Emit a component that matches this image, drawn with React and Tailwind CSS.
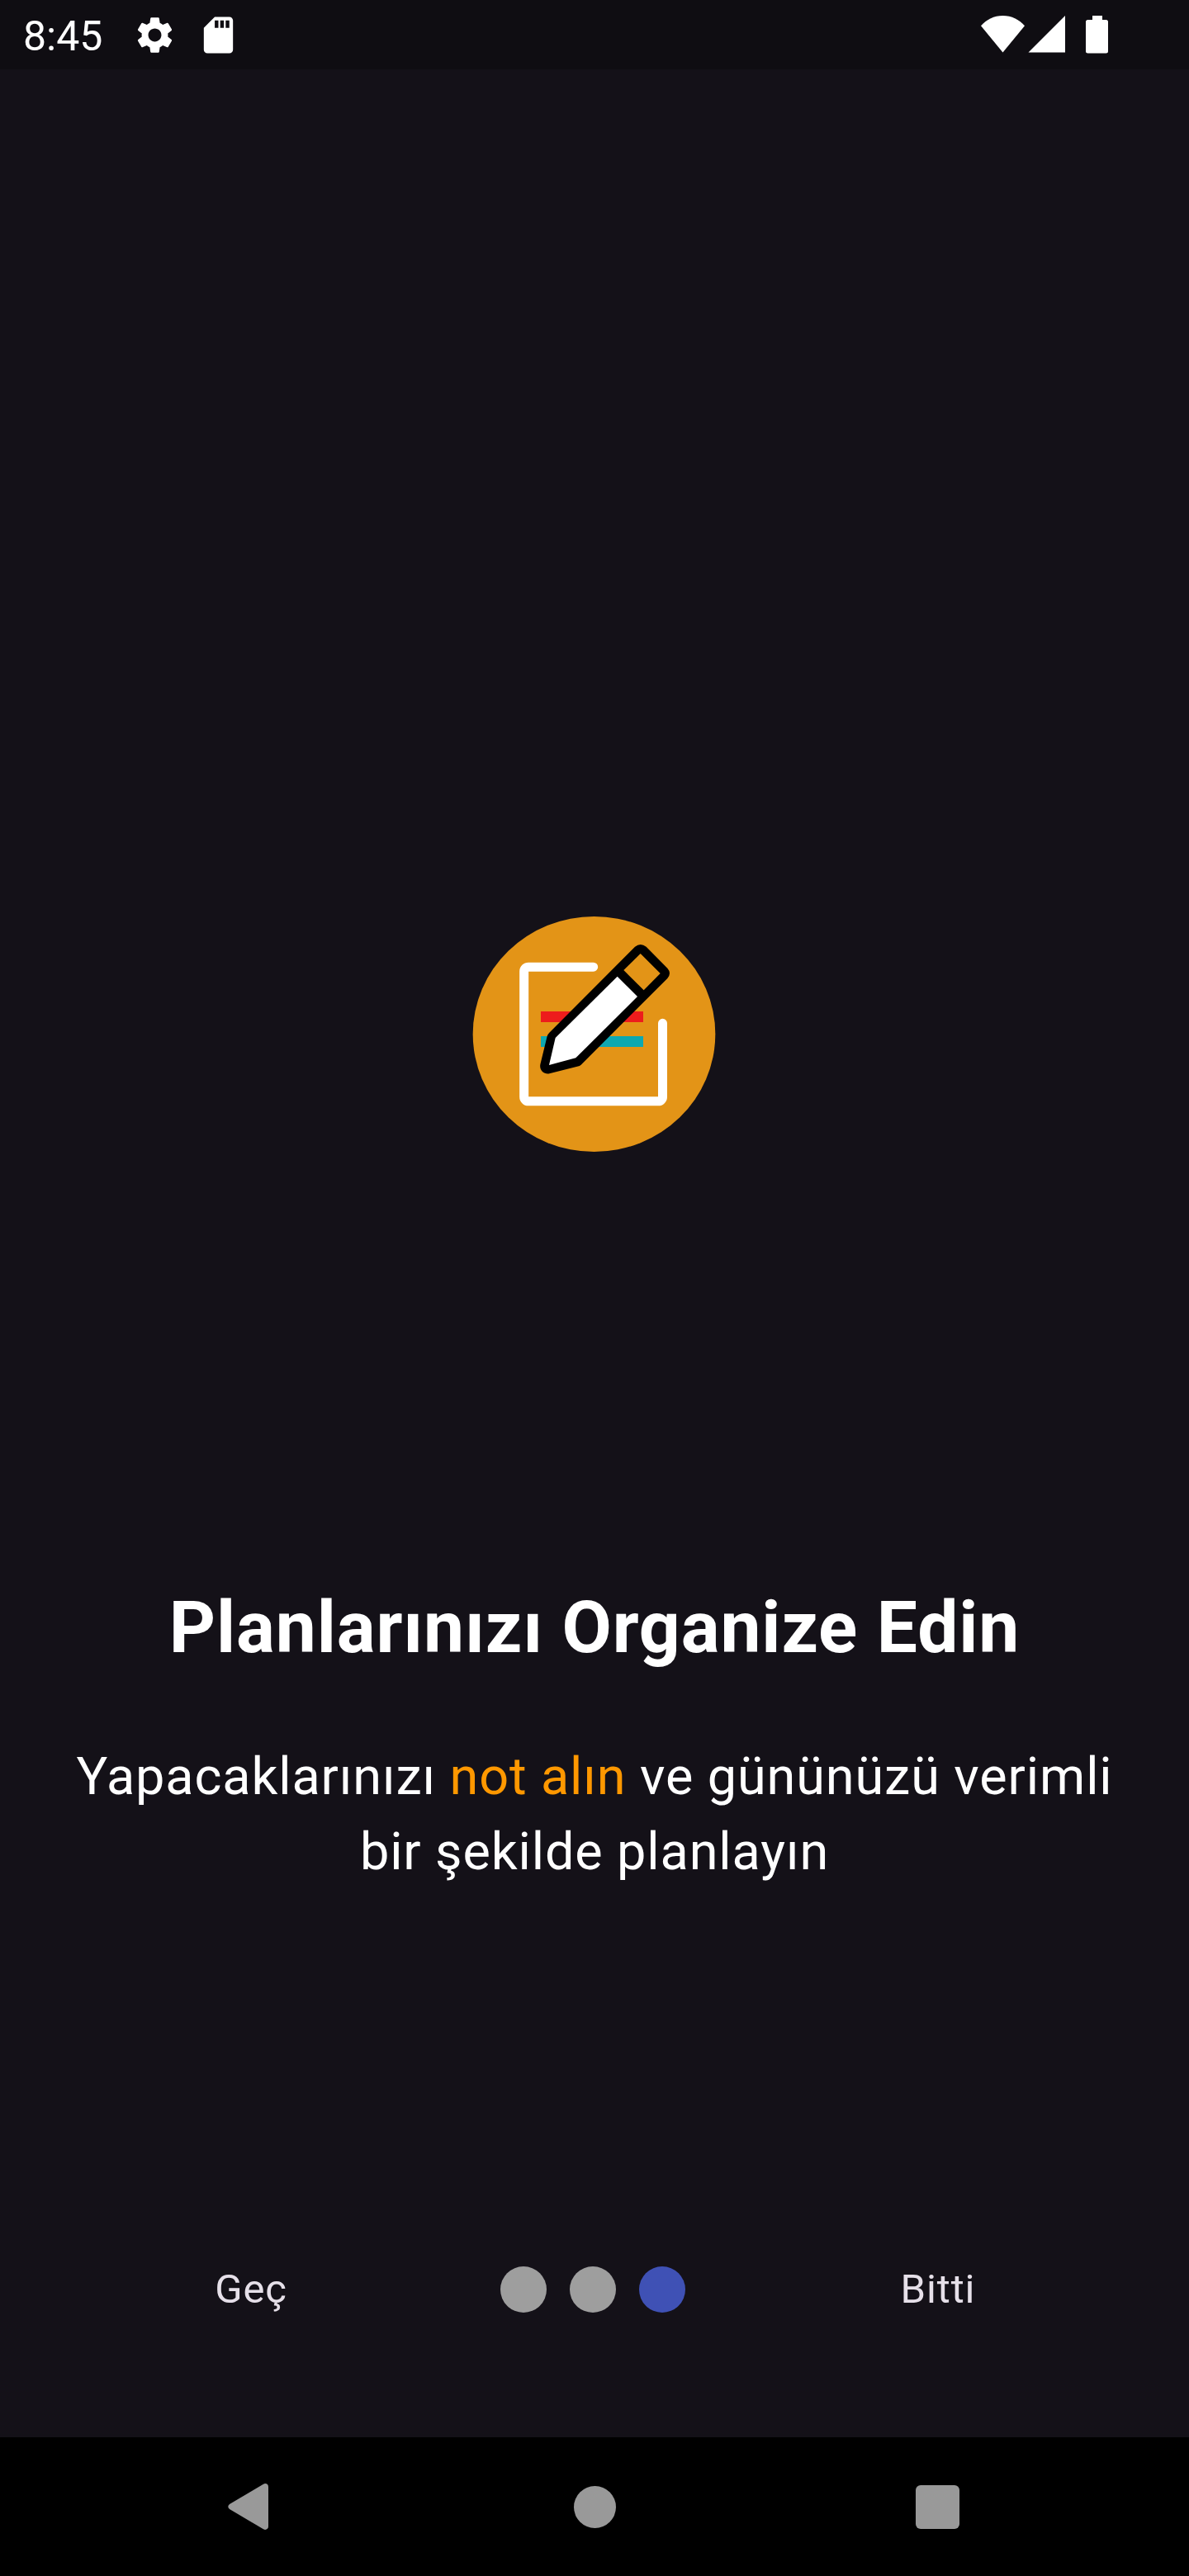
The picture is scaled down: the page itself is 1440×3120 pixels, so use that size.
import React from "react";

function StatusBar() {
  return (
    <header className="flex h-[84px] items-center bg-[#0f0d12] text-white">
      <span className="ml-[28px] w-[133px] pt-[4px] text-[50px] leading-[80px]">8:45</span>
      <svg className="size-[53px]" viewBox="0 0 24 24" fill="currentColor">
        <path d="M19.14 12.94c.04-.3.06-.61.06-.94 0-.32-.02-.64-.07-.94l2.03-1.58c.18-.14.23-.41.12-.61l-1.92-3.32c-.12-.22-.37-.29-.59-.22l-2.39.96c-.5-.38-1.03-.7-1.62-.94l-.36-2.54c-.04-.24-.24-.41-.48-.41h-3.84c-.24 0-.43.17-.47.41l-.36 2.54c-.59.24-1.13.57-1.62.94l-2.39-.96c-.22-.08-.47 0-.59.22L2.74 8.87c-.12.21-.08.47.12.61l2.03 1.58c-.05.3-.09.63-.09.94s.02.64.07.94l-2.03 1.58c-.18.14-.23.41-.12.61l1.92 3.32c.12.22.37.29.59.22l2.39-.96c.5.38 1.03.7 1.62.94l.36 2.54c.05.24.24.41.48.41h3.84c.24 0 .44-.17.47-.41l.36-2.54c.59-.24 1.13-.56 1.62-.94l2.39.96c.22.08.47 0 .59-.22l1.92-3.32c.12-.22.07-.47-.12-.61l-2.01-1.58zM12 15.6c-1.98 0-3.6-1.62-3.6-3.6s1.62-3.6 3.6-3.6 3.6 1.62 3.6 3.6-1.62 3.6-3.6 3.6z" />
      </svg>
      <svg className="ml-[24px] size-[53px]" viewBox="0 0 24 24" fill="currentColor">
        <path d="M18 2h-8L4 8v12c0 1.1.9 2 2 2h12c1.1 0 2-.9 2-2V4c0-1.1-.9-2-2-2zm-6 6h-2V4h2v4zm3 0h-2V4h2v4zm3 0h-2V4h2v4z" />
      </svg>
      <svg className="ml-auto h-[84px] w-[54px]" viewBox="0 0 54 84" fill="currentColor">
        <path d="M0 31.300C7 23.500 16 19 26.500 19S46 23.500 53 31.300L26.500 63.500Z" />
      </svg>
      <svg className="ml-[3px] h-[84px] w-[46px]" viewBox="0 0 46 84" fill="currentColor">
        <path d="M.5 63.500 45 19v44.500Z" />
      </svg>
      <svg className="mr-[97px] ml-[24px] h-[84px] w-[28px]" viewBox="0 0 28 84" fill="currentColor">
        <path d="M8 19h12v5h4.500a2.500 2.500 0 0 1 2.500 2.500v35.500a2.500 2.500 0 0 1-2.500 2.500h-22a2.500 2.500 0 0 1-2.500-2.500v-35.500a2.500 2.500 0 0 1 2.500-2.500h5.500Z" />
      </svg>
    </header>
  );
}

function NoteLogo() {
  return (
    <svg className="h-[310px] w-[320px]" viewBox="0 0 960 930">
      <ellipse cx="478.500" cy="457.500" rx="440.500" ry="427.500" fill="#e39417" />
      <path
        d="M476 213.500H240a16 16 0 0 0-16 16V685.500a16 16 0 0 0 16 16H711.500a16 16 0 0 0 16-16V418"
        fill="none"
        stroke="#fff"
        strokeWidth="33"
        strokeLinecap="round"
      />
      <path d="M285 375h372v39H285z" fill="#ed1c1c" />
      <path d="M285 465h372v39H285z" fill="#0ea8b1" />
      <path
        d="M627 140Q647 124 668 140L745 218Q761 236 745 255L431 569Q426 573 420 574.500L316 601C298 605 279 590 283 568L308 465Q310 458 316 452Z"
        fill="#000"
      />
      <path d="M563 248 636 321 412 544 315 570 338 471Z" fill="#fff" />
      <path d="M647 165 719 237 659 298 586 225Z" fill="#e39417" />
    </svg>
  );
}

function PageDots({ count, active }) {
  return (
    <div className="flex items-center gap-[28px]">
      {Array.from({ length: count }, (_, i) => (
        <span
          key={i}
          className={i === active ? "size-14 rounded-full bg-[#3f51b5]" : "size-14 rounded-full bg-[#9e9e9e]"}
        />
      ))}
    </div>
  );
}

function NavigationBar() {
  return (
    <nav className="flex h-[168px] items-center bg-black text-[#999999]">
      <svg className="ml-[276px] h-[56px] w-[50px]" viewBox="0 0 50 56" fill="currentColor">
        <path d="M43 .7C46 -1 49 1 49 4V52C49 55 46 57 43 55.300L2 31Q-1.500 28 2 25Z" />
      </svg>
      <span className="ml-[368.500px] size-[51px] rounded-full bg-[#999999]" />
      <span className="ml-[363px] size-[53px] rounded-[6px] bg-[#999999]" />
    </nav>
  );
}

export default function App() {
  return (
    <div className="flex h-[3120px] w-[1440px] flex-col overflow-hidden bg-[#141118] font-['Roboto',sans-serif]">
      <StatusBar />
      <main className="flex flex-1 flex-col items-center pt-[1016px] text-white">
        <NoteLogo />
        <h1 className="mt-[509px] text-[87.5px] leading-[104px] font-bold tracking-[0.875px] whitespace-nowrap">
          Planlarınızı Organize Edin
        </h1>
        <p className="mt-[83px] text-center text-[63px] leading-[91px] tracking-[0.875px] whitespace-nowrap">
          Yapacaklarınızı <span className="text-[#ff9800]">not alın</span> ve gününüzü verimli
          <br />
          bir şekilde planlayın
        </p>
        <div className="mt-[450px] grid w-full grid-cols-[606px_224px_610px] items-center text-[49px] leading-[70px] tracking-[0.875px] text-[#e6e0e9]">
          <button className="pl-[2px] text-center">Geç</button>
          <PageDots count={3} active={2} />
          <button className="pl-[2px] text-center">Bitti</button>
        </div>
      </main>
      <NavigationBar />
    </div>
  );
}
